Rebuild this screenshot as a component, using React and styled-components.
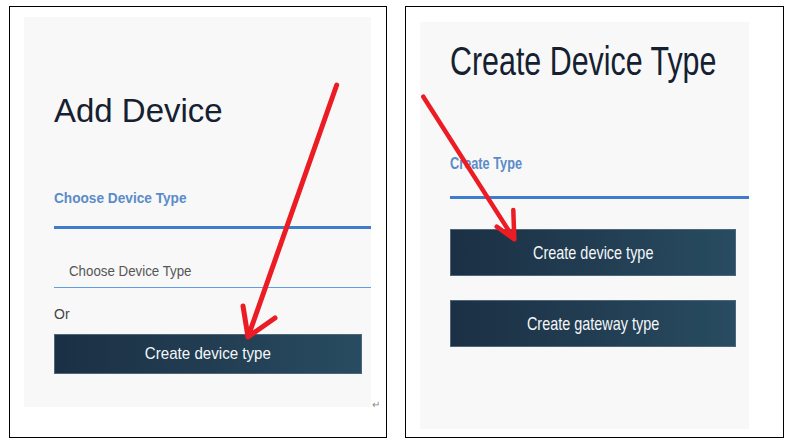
import styled, { createGlobalStyle } from 'styled-components';

const GlobalStyle = createGlobalStyle`
	html, body {
		margin: 0;
		background: #fff;
		font-family: "Liberation Sans", Arial, sans-serif;
	}
`;

export default function App() {
	return (
		<>
			<GlobalStyle />
			<Page>
				<Frame $w={378} $pad="10px 0 0 14px">
					<Panel $w={347} $h={390} $pad="76px 0 0 30px">
						<Title $size={34}>
							<Squeeze $x={0.97}>Add Device</Squeeze>
						</Title>
						<Label $size={15} $top={63}>
							<Squeeze $x={0.91}>Choose Device Type</Squeeze>
						</Label>
						<Rule $top={21} />
						<Field>
							<Squeeze $x={0.95}>Choose Device Type</Squeeze>
						</Field>
						<Or>Or</Or>
						<Button $w={308} $h={40} $top={13} $size={17}>
							<Squeeze $x={0.89} $origin="center">Create device type</Squeeze>
						</Button>
					</Panel>
					<Mark>↵</Mark>
					<Arrow d="M326.7 78 L238 330 M233 299 L238 330 L265 311" $stroke={5} />
				</Frame>
				<Frame $w={379} $pad="15px 0 0 14px">
					<Panel $w={329} $h={407} $pad="19px 0 0 30px">
						<Title $size={40}>
							<Squeeze $x={0.76}>Create Device Type</Squeeze>
						</Title>
						<Label $size={17} $top={74}>
							<Squeeze $x={0.75}>Create Type</Squeeze>
						</Label>
						<Rule $top={24} />
						<Button $w={286} $h={47} $top={30} $size={19}>
							<Squeeze $x={0.76} $origin="center">Create device type</Squeeze>
						</Button>
						<Button $w={286} $h={47} $top={24} $size={19}>
							<Squeeze $x={0.76} $origin="center">Create gateway type</Squeeze>
						</Button>
					</Panel>
					<Arrow d="M17.3 89.7 L108.3 232.3 M107.3 203 L108.3 232.3 L90.7 219.7" $stroke={4.5} />
				</Frame>
			</Page>
		</>
	);
}

const Arrow = ({ d, $stroke }) => (
	<Overlay>
		<path
			d={d}
			fill="none"
			stroke="#ec1c24"
			strokeWidth={$stroke}
			strokeLinecap="round"
			strokeLinejoin="round"
		/>
	</Overlay>
);

const Page = styled.div`
	display: flex;
	gap: 18px;
	padding: 6px 0 0 9px;
`;

const Frame = styled.section`
	position: relative;
	box-sizing: border-box;
	width: ${({ $w }) => $w}px;
	height: 432px;
	border: 1px solid #000;
	padding: ${({ $pad }) => $pad};
	display: flex;
	align-items: flex-start;
`;

const Panel = styled.div`
	box-sizing: border-box;
	width: ${({ $w }) => $w}px;
	height: ${({ $h }) => $h}px;
	padding: ${({ $pad }) => $pad};
	background: #f8f8f8;
	display: flex;
	flex-direction: column;
	align-items: flex-start;
	flex-shrink: 0;
`;

const Squeeze = styled.span`
	display: inline-block;
	white-space: nowrap;
	transform: scaleX(${({ $x }) => $x});
	transform-origin: ${({ $origin }) => $origin || 'left'} center;
`;

const Title = styled.h1`
	margin: 0;
	font-size: ${({ $size }) => $size}px;
	line-height: ${({ $size }) => $size}px;
	font-weight: normal;
	color: #152030;
`;

const Label = styled.div`
	margin-top: ${({ $top }) => $top}px;
	font-size: ${({ $size }) => $size}px;
	line-height: ${({ $size }) => $size}px;
	font-weight: bold;
	color: #5b8bc9;
`;

const Rule = styled.div`
	align-self: stretch;
	margin-top: ${({ $top }) => $top}px;
	height: 3px;
	background: #3f7ccb;
`;

const Field = styled.div`
	align-self: stretch;
	padding: 35px 0 9px 15px;
	font-size: 14px;
	line-height: 14px;
	color: #555;
	border-bottom: 1px solid #5f9de6;
`;

const Or = styled.div`
	margin-top: 19px;
	font-size: 14px;
	line-height: 14px;
	color: #444;
`;

const Button = styled.button`
	box-sizing: border-box;
	width: ${({ $w }) => $w}px;
	height: ${({ $h }) => $h}px;
	margin-top: ${({ $top }) => $top}px;
	padding: 0;
	display: flex;
	align-items: center;
	justify-content: center;
	border: 1px solid #4f6679;
	background: linear-gradient(90deg, #1b3044 0%, #223d52 50%, #284c61 100%);
	color: #f4f7f9;
	font-family: inherit;
	font-size: ${({ $size }) => $size}px;
	cursor: pointer;
`;

const Mark = styled.span`
	align-self: flex-end;
	margin: 0 0 27px 1px;
	font-size: 10px;
	line-height: 10px;
	color: #888;
`;

const Overlay = styled.svg`
	position: absolute;
	inset: 0;
	width: 100%;
	height: 100%;
	overflow: visible;
	pointer-events: none;
`;
